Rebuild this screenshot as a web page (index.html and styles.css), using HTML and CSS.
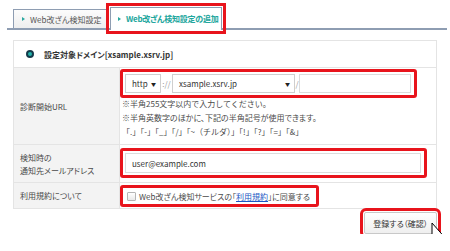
FILE: index.html
```html
<!doctype html>
<html lang="ja">
<head>
  <meta charset="UTF-8">
  <meta name="viewport" content="width=device-width, initial-scale=1.0">
  <title>Web改ざん検知設定の追加</title>
  <link rel="stylesheet" href="styles.css">
</head>
<body>
  <div class="tabs">
    <a class="tab" href="#">Web改ざん検知設定</a>
    <a class="tab is-active" href="#">Web改ざん検知設定の追加</a>
  </div>

  <form class="panel">
    <div class="domain"><span class="dot"></span>設定対象ドメイン[xsample.xsrv.jp]</div>

    <div class="row">
      <div class="label">診断開始URL</div>
      <div class="field">
        <div class="mark url-group">
          <span class="select scheme">http<i class="caret">▼</i></span>
          <span class="sep">://</span>
          <span class="select host">xsample.xsrv.jp<i class="caret">▼</i></span>
          <span class="sep slash">/</span>
          <input type="text" class="text path">
        </div>
        <p class="note first">※半角255文字以内で入力してください。</p>
        <p class="note">※半角英数字のほかに、下記の半角記号が使用できます。</p>
        <p class="note symbols">「.」「-」「_」「/」「~（チルダ）」「!」「?」「=」「&amp;」</p>
      </div>
    </div>

    <div class="row">
      <div class="label">検知時の<br>通知先メールアドレス</div>
      <div class="field field-mail">
        <div class="mark mail-group">
          <input type="text" class="text mail" value="user@example.com">
        </div>
      </div>
    </div>

    <div class="row">
      <div class="label">利用規約について</div>
      <div class="field field-terms">
        <label class="mark terms">
          <span class="check"></span>
          <span>Web改ざん検知サービスの「<a href="#">利用規約</a>」に同意する</span>
        </label>
      </div>
    </div>
  </form>

  <div class="actions">
    <button type="button" class="submit">登録する（確認）</button>
  </div>

  <svg class="cursor" width="14" height="26" viewBox="0 0 14 26">
    <path d="M1 1 L1 19.5 L5.2 15.6 L8.3 23.5 L11.2 22.3 L8.1 14.8 L13 14.5 Z" fill="#fff" stroke="#000" stroke-width="1" stroke-linejoin="round"/>
  </svg>
</body>
</html>
```

FILE: styles.css
```css
body {
  margin: 0;
  font-family: "Noto Sans CJK JP", "Noto Sans", sans-serif;
  font-size: 8px;
  font-feature-settings: "palt";
  color: #4a4a4a;
  background: #fff;
  white-space: nowrap;
  position: relative;
}

.tabs {
  display: flex;
  align-items: flex-end;
  gap: 2px;
  height: 20px;
  margin: 0 3px 0 7px;
  padding: 8px 0 0 6px;
  border-bottom: 2px solid #8e9db2;
}

.tab {
  position: relative;
  display: flex;
  align-items: center;
  height: 19px;
  padding: 0 4px 0 16px;
  border: 1px solid #8e9db2;
  border-bottom: none;
  background: linear-gradient(#fcfcfc, #eeeeee);
  color: #555;
  text-decoration: none;
  box-sizing: border-box;
  width: 95px;
}

.tab::before {
  content: "";
  position: absolute;
  left: 8px;
  top: 50%;
  margin-top: -2px;
  border-left: 3px solid #2aa8a0;
  border-top: 2px solid transparent;
  border-bottom: 2px solid transparent;
}

.tab.is-active {
  width: 112px;
  height: 23px;
  margin-bottom: -2px;
  padding: 0 0 1px 15px;
  background: #fff;
  color: #21a69d;
  font-weight: bold;
  letter-spacing: -0.25px;
  outline: 3px solid #e8141c;
  outline-offset: 1px;
}

.tab.is-active::before {
  left: 7px;
}

.panel {
  margin: 10px 13px 0;
  border: 1px solid #e4e4e4;
}

.domain {
  display: flex;
  align-items: center;
  height: 26px;
  padding-left: 12px;
  color: #333;
  font-weight: bold;
}

.dot {
  width: 4px;
  height: 4px;
  margin-right: 10px;
  border: 2px solid #143a4a;
  border-radius: 50%;
  background: #24b3aa;
}

.row {
  display: grid;
  grid-template-columns: 106px 1fr;
  border-top: 1px solid #e4e4e4;
}

.label {
  display: flex;
  align-items: center;
  padding-left: 6px;
  background: #f3f3f3;
  border-right: 1px solid #e4e4e4;
  line-height: 13px;
}

.field {
  padding: 1px 0 5px;
}

.mark {
  display: flex;
  align-items: center;
  border: 3px solid #e8141c;
  border-radius: 3px;
  padding: 2px 3px 2px 2px;
  box-sizing: border-box;
}

.url-group {
  width: 297px;
}

.select {
  position: relative;
  display: flex;
  align-items: center;
  height: 19px;
  padding-left: 6px;
  border: 1px solid #cfcfcf;
  box-sizing: border-box;
  color: #333;
  background: #fff;
}

.caret {
  position: absolute;
  right: 4px;
  font-style: normal;
  font-size: 5px;
  color: #222;
}

.scheme {
  width: 36px;
}

.host {
  width: 123px;
}

.sep {
  width: 11px;
  text-align: center;
  color: #999;
}

.slash {
  width: 4px;
}

.text {
  height: 19px;
  margin: 0;
  padding: 0 6px;
  border: 1px solid #dcdcdc;
  box-sizing: border-box;
  font: inherit;
  color: #333;
}

.path {
  width: 112px;
}

.note {
  margin: 0;
  line-height: 14px;
  padding-left: 2px;
}

.note.first {
  margin-top: -1px;
  font-feature-settings: normal;
}

.symbols {
  font-feature-settings: normal;
}

.field-mail {
  padding: 3px 0 4px;
}

.mail-group {
  width: 307px;
}

.mail {
  width: 297px;
  height: 20px;
}

.field-terms {
  padding: 2px 0 1px;
}

.terms {
  width: 199px;
  height: 22px;
  padding: 0 0 0 4px;
  gap: 3px;
  color: #4a4a4a;
}

.check {
  width: 7px;
  height: 7px;
  border: 1px solid #b5b5b5;
  border-radius: 1px;
  background: linear-gradient(#fff, #e9e9e9);
}

.terms a {
  color: #1a56c4;
}

.actions {
  display: flex;
  justify-content: flex-end;
  padding: 3px 13px 0 0;
}

.submit {
  width: 73px;
  height: 22px;
  padding: 0;
  border: 1px solid #c8c8c8;
  border-radius: 2px;
  background: linear-gradient(#fff, #efefef);
  font: inherit;
  color: #333;
  outline: 3px solid #e8141c;
  outline-offset: 1px;
}

.cursor {
  position: absolute;
  left: 431px;
  top: 222px;
}
```
